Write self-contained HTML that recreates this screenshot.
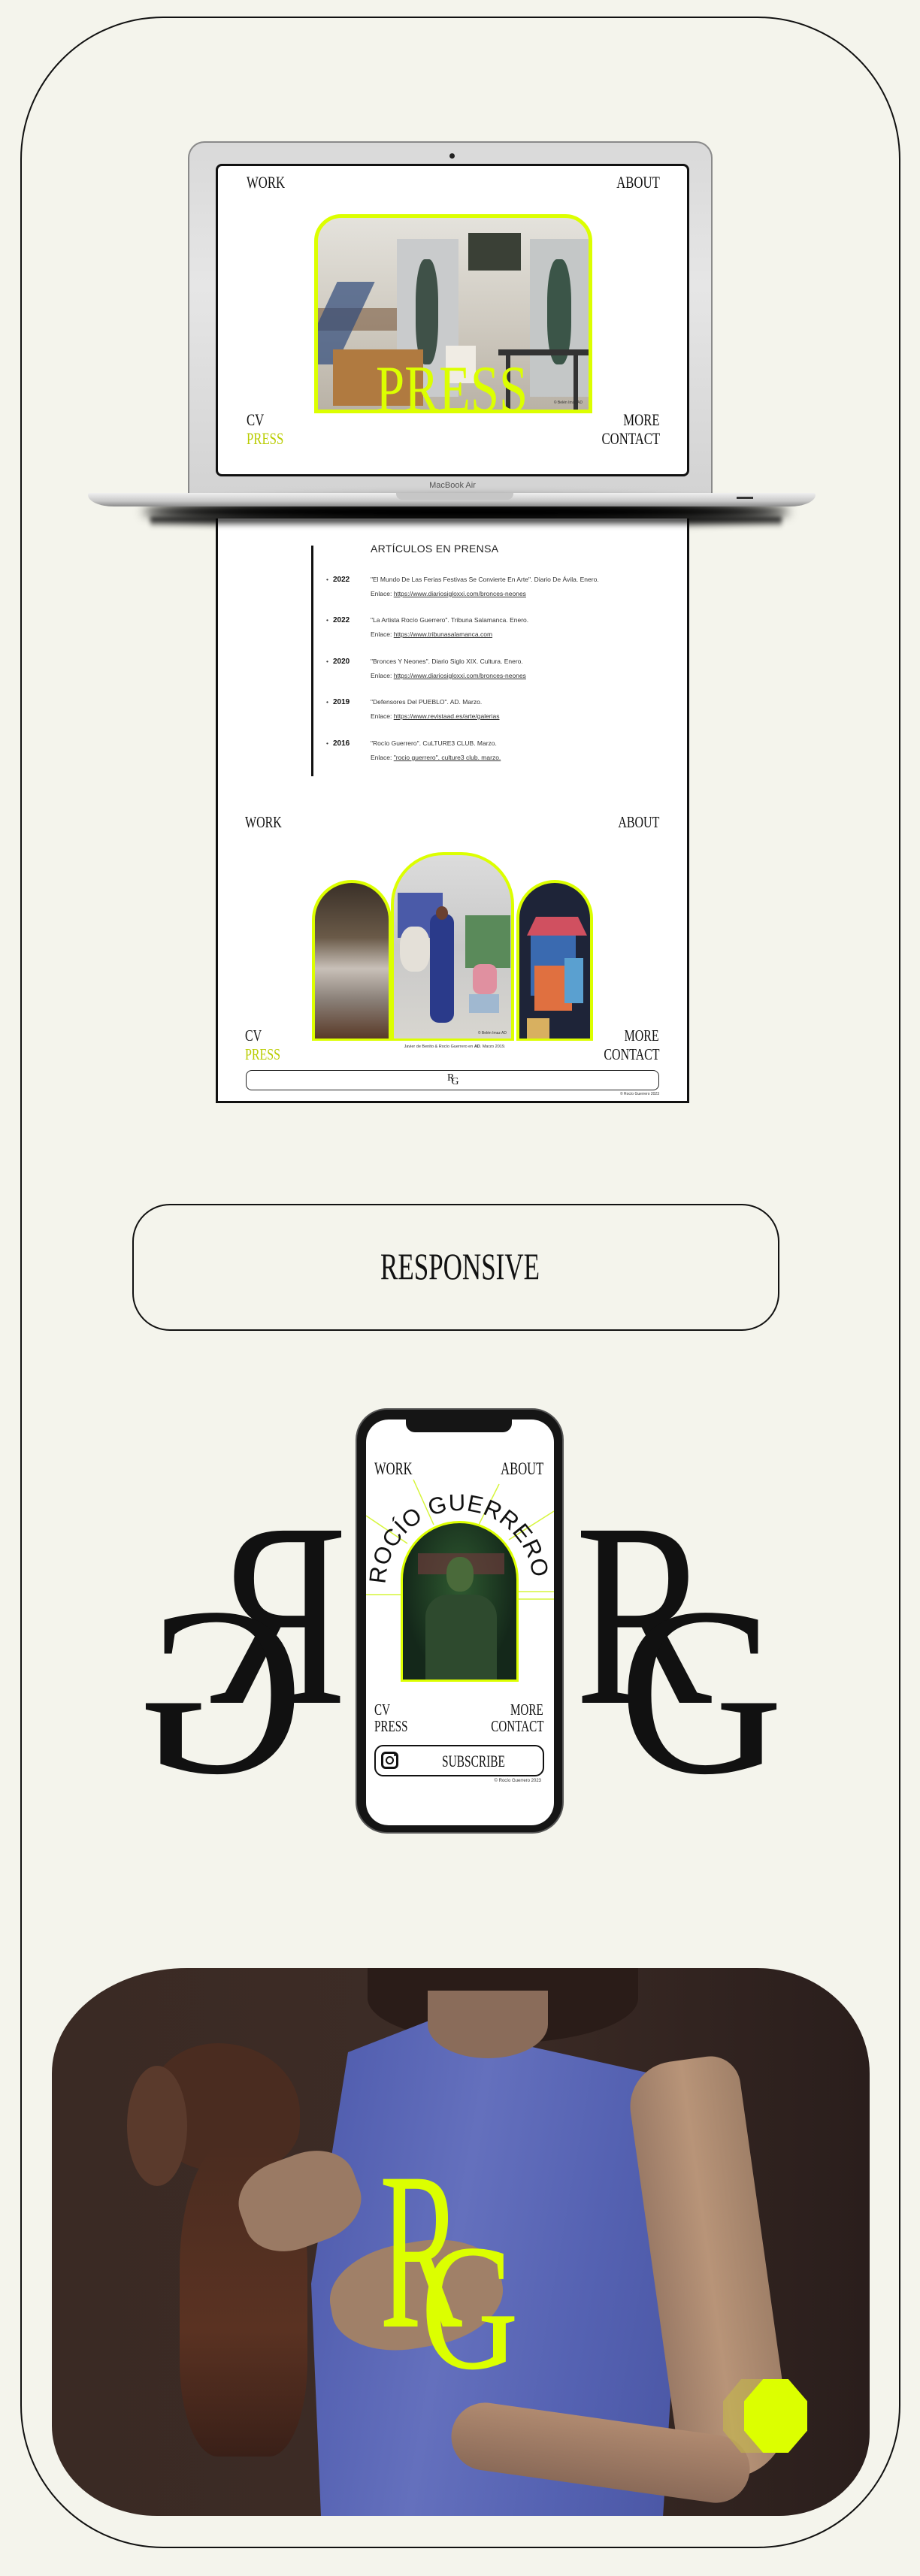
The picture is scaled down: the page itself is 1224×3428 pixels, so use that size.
<!DOCTYPE html>
<html><head><meta charset="utf-8"><style>
*{margin:0;padding:0;box-sizing:border-box}
body{width:1224px;height:3428px;background:#f4f4ec;position:relative;overflow:hidden;font-family:"Liberation Sans",sans-serif}
.a{position:absolute}
.d{position:absolute;font-family:"Liberation Serif",serif;white-space:nowrap;line-height:1;color:#111;transform-origin:0 50%}
.r{transform-origin:100% 50%}
</style></head><body>

<div class="a" style="left:27px;top:22px;width:1171px;height:3369px;border:2.5px solid #111;border-radius:190px"></div>

<!-- laptop lid -->
<div class="a" style="left:250px;top:188px;width:698px;height:480px;border-radius:22px 22px 0 0;background:linear-gradient(#d9d9d9,#e6e6e6 40%,#d2d2d2);border:2px solid #8a8a8a;border-bottom:none"></div>
<div class="a" style="left:598px;top:204px;width:7px;height:7px;border-radius:50%;background:#222"></div>
<div class="a" style="left:287px;top:218px;width:630px;height:416px;background:#fff;border:3px solid #111;border-radius:8px"></div>
<div class="a" style="left:567px;top:640px;width:70px;font-size:11px;color:#555;text-align:center">MacBook Air</div>

<div class="d" style="left:328px;top:232px;font-size:22px;transform:scaleX(.76)">WORK</div>
<div class="d r" style="right:346px;top:232px;font-size:22px;transform:scaleX(.76)">ABOUT</div>
<div class="d" style="left:328px;top:548px;font-size:22px;transform:scaleX(.76)">CV</div>
<div class="d" style="left:328px;top:573px;font-size:22px;transform:scaleX(.76);color:#b9cc00">PRESS</div>
<div class="d r" style="right:346px;top:548px;font-size:22px;transform:scaleX(.76)">MORE</div>
<div class="d r" style="right:346px;top:573px;font-size:22px;transform:scaleX(.76)">CONTACT</div>
<div class="a" style="left:418px;top:285px;width:370px;height:265px;border:5px solid #dcff00;border-radius:36px 36px 0 0;overflow:hidden;background:linear-gradient(#e4e2dc,#cfcac0 55%,#b9b2a6)">
  <div class="a" style="left:0;top:120px;width:110px;height:30px;background:#7a5a40;opacity:.6"></div>
  <div class="a" style="left:105px;top:28px;width:82px;height:210px;background:#c9cbcc"></div>
  <div class="a" style="left:130px;top:55px;width:30px;height:140px;border-radius:40%;background:#3f5148"></div>
  <div class="a" style="left:282px;top:28px;width:80px;height:210px;background:#c4c7c7"></div>
  <div class="a" style="left:305px;top:55px;width:32px;height:140px;border-radius:40%;background:#3b5548"></div>
  <div class="a" style="left:200px;top:20px;width:70px;height:50px;background:#3a4036"></div>
  <div class="a" style="left:0;top:85px;width:50px;height:110px;background:#2f4a7a;opacity:.7;transform:skewX(-25deg)"></div>
  <div class="a" style="left:20px;top:175px;width:120px;height:75px;background:#b07a40"></div>
  <div class="a" style="left:240px;top:175px;width:120px;height:8px;background:#333"></div>
  <div class="a" style="left:250px;top:180px;width:6px;height:75px;background:#333"></div>
  <div class="a" style="left:340px;top:180px;width:6px;height:75px;background:#333"></div>
  <div class="a" style="left:170px;top:170px;width:40px;height:50px;background:#f0ece4"></div>
  <div class="a" style="right:8px;bottom:6px;font-size:5px;color:#333">© Belén Imaz AD</div>
</div>
<div class="d" style="left:500px;top:475px;font-size:88px;color:#dcff00;transform:scaleX(.78)">PRESS</div>

<!-- laptop base -->
<div class="a" style="left:190px;top:664px;width:860px;height:34px;border-radius:50%;background:#000;filter:blur(7px)"></div>
<div class="a" style="left:117px;top:656px;width:968px;height:18px;border-radius:3px 3px 40px 40px/3px 3px 18px 18px;background:linear-gradient(#f0f0f0,#c8c8c8 60%,#8a8a8a)"></div>
<div class="a" style="left:527px;top:656px;width:156px;height:9px;border-radius:0 0 8px 8px;background:#c6c6c6"></div>
<div class="a" style="left:980px;top:661px;width:22px;height:3px;background:#333"></div>

<!-- press page -->
<div class="a" style="left:287px;top:690px;width:630px;height:778px;background:#fff;border:3px solid #111;border-top:none"></div>
<div class="a" style="left:200px;top:688px;width:840px;height:14px;background:linear-gradient(#000,rgba(0,0,0,0));filter:blur(3px)"></div>
<div class="a" style="left:414px;top:726px;width:2.5px;height:307px;background:#111"></div>
<div class="a" style="left:493px;top:722px;font-size:14px;color:#222;letter-spacing:.3px">ARTÍCULOS EN PRENSA</div>

<div class="a" style="left:0;top:0;font-size:8.5px;color:#333">
<div class="a" style="left:434px;top:762px;width:300px;line-height:19px"><span style="position:absolute;left:0">•</span><b style="position:absolute;left:9px;font-size:10px;color:#111">2022</b><span style="position:absolute;left:59px;white-space:nowrap">"El Mundo De Las Ferias Festivas Se Convierte En Arte". Diario De Ávila. Enero.<br>Enlace: <u>https://www.diariosigloxxi.com/bronces-neones</u></span></div>
<div class="a" style="left:434px;top:816px;width:300px;line-height:19px"><span style="position:absolute;left:0">•</span><b style="position:absolute;left:9px;font-size:10px;color:#111">2022</b><span style="position:absolute;left:59px;white-space:nowrap">"La Artista Rocío Guerrero". Tribuna Salamanca. Enero.<br>Enlace: <u>https://www.tribunasalamanca.com</u></span></div>
<div class="a" style="left:434px;top:871px;width:300px;line-height:19px"><span style="position:absolute;left:0">•</span><b style="position:absolute;left:9px;font-size:10px;color:#111">2020</b><span style="position:absolute;left:59px;white-space:nowrap">"Bronces Y Neones". Diario Siglo XIX. Cultura. Enero.<br>Enlace: <u>https://www.diariosigloxxi.com/bronces-neones</u></span></div>
<div class="a" style="left:434px;top:925px;width:300px;line-height:19px"><span style="position:absolute;left:0">•</span><b style="position:absolute;left:9px;font-size:10px;color:#111">2019</b><span style="position:absolute;left:59px;white-space:nowrap">"Defensores Del PUEBLO". AD. Marzo.<br>Enlace: <u>https://www.revistaad.es/arte/galerias</u></span></div>
<div class="a" style="left:434px;top:980px;width:300px;line-height:19px"><span style="position:absolute;left:0">•</span><b style="position:absolute;left:9px;font-size:10px;color:#111">2016</b><span style="position:absolute;left:59px;white-space:nowrap">"Rocío Guerrero". CuLTURE3 CLUB. Marzo.<br>Enlace: <u>"rocio guerrero". culture3 club. marzo.</u></span></div>
</div>

<div class="d" style="left:326px;top:1084px;font-size:21px;transform:scaleX(.76)">WORK</div>
<div class="d r" style="right:347px;top:1084px;font-size:21px;transform:scaleX(.76)">ABOUT</div>
<div class="d" style="left:326px;top:1368px;font-size:21px;transform:scaleX(.76)">CV</div>
<div class="d" style="left:326px;top:1393px;font-size:21px;transform:scaleX(.76);color:#b9cc00">PRESS</div>
<div class="d r" style="right:347px;top:1368px;font-size:21px;transform:scaleX(.76)">MORE</div>
<div class="d r" style="right:347px;top:1393px;font-size:21px;transform:scaleX(.76)">CONTACT</div>

<div class="a" style="left:415px;top:1171px;width:106px;height:214px;border:4px solid #dcff00;border-bottom-width:3px;border-radius:53px 53px 0 0;overflow:hidden;background:linear-gradient(#3a3028,#6a5a48 35%,#c8c0b8 55%,#8a8078 75%,#5a3a28)"></div>
<div class="a" style="left:520px;top:1134px;width:164px;height:251px;border:4px solid #dcff00;border-bottom-width:3px;border-radius:70px 70px 0 0;overflow:hidden;background:linear-gradient(#dcdcdc,#c8c8c8 50%,#d8d6d0)">
  <div class="a" style="left:5px;top:50px;width:60px;height:60px;background:#4a5aa8"></div>
  <div class="a" style="left:95px;top:80px;width:60px;height:70px;background:#5a8a5a"></div>
  <div class="a" style="left:8px;top:95px;width:40px;height:60px;border-radius:40%;background:#e4e0d8"></div>
  <div class="a" style="left:48px;top:78px;width:32px;height:145px;border-radius:12px;background:#2a3a8a"></div>
  <div class="a" style="left:56px;top:68px;width:16px;height:18px;border-radius:50%;background:#6a4030"></div>
  <div class="a" style="left:105px;top:145px;width:32px;height:40px;border-radius:10px;background:#e090a0"></div>
  <div class="a" style="left:100px;top:185px;width:40px;height:25px;background:#a0b8d0"></div>
  <div class="a" style="right:6px;bottom:4px;font-size:5px;color:#333">© Belén Imaz AD</div>
</div>
<div class="a" style="left:687px;top:1171px;width:102px;height:214px;border:4px solid #dcff00;border-bottom-width:3px;border-radius:51px 51px 0 0;overflow:hidden;background:#1e2438">
  <div class="a" style="left:10px;top:45px;width:80px;height:25px;background:#d05060;clip-path:polygon(15% 0,85% 0,100% 100%,0 100%)"></div>
  <div class="a" style="left:15px;top:70px;width:60px;height:80px;background:#3a6ab0"></div>
  <div class="a" style="left:20px;top:110px;width:50px;height:60px;background:#e07040"></div>
  <div class="a" style="left:60px;top:100px;width:25px;height:60px;background:#5aa0d0"></div>
  <div class="a" style="left:10px;top:180px;width:30px;height:30px;background:#d8b060"></div>
</div>
<div class="a" style="left:420px;top:1390px;width:370px;text-align:center;font-size:5.5px;color:#333">Javier de Benito &amp; Rocío Guerrero en <b>AD</b>. Marzo 2019.</div>
<div class="a" style="left:327px;top:1424px;width:550px;height:27px;border:1.5px solid #222;border-radius:8px"></div>
<div class="d" style="left:595px;top:1428px;font-size:14px">R<span style="margin-left:-4px;position:relative;top:5px">G</span></div>
<div class="a" style="left:800px;top:1453px;width:77px;text-align:right;font-size:5px;color:#333">© Rocío Guerrero 2023</div>

<!-- RESPONSIVE -->
<div class="a" style="left:176px;top:1602px;width:861px;height:169px;border:2.5px solid #111;border-radius:50px"></div>
<div class="d" style="left:0;width:1224px;top:1660px;font-size:50px;text-align:center;transform-origin:50% 50%;transform:scaleX(.7)">RESPONSIVE</div>

<!-- big RG monograms -->
<div class="a" style="left:182px;top:2029px;width:272px;height:365px;overflow:hidden;transform:scaleX(-1)">
  <div class="d" style="left:-8px;top:-56px;font-size:350px;transform:scaleX(.78)">R</div>
  <div class="d" style="left:50px;top:62px;font-size:320px;transform:scaleX(.95)">G</div>
</div>
<div class="a" style="left:773px;top:2029px;width:272px;height:365px;overflow:hidden">
  <div class="d" style="left:-8px;top:-56px;font-size:350px;transform:scaleX(.78)">R</div>
  <div class="d" style="left:50px;top:62px;font-size:320px;transform:scaleX(.95)">G</div>
</div>

<!-- phone -->
<div class="a" style="left:473px;top:1874px;width:277px;height:566px;border-radius:42px;background:#151515;border:2px solid #555"></div>
<div class="a" style="left:487px;top:1889px;width:250px;height:540px;border-radius:30px;background:#fff;overflow:hidden">
  <div class="a" style="left:53px;top:0;width:141px;height:17px;background:#151515;border-radius:0 0 12px 12px"></div>
</div>
<svg class="a" style="left:487px;top:1889px" width="250" height="540">
  <g stroke="#d6f53a" stroke-width="1.5">
    <line x1="63" y1="80" x2="90" y2="140"/><line x1="177" y1="86" x2="150" y2="140"/>
    <line x1="0" y1="128" x2="55" y2="165"/><line x1="250" y1="122" x2="190" y2="160"/>
    <line x1="0" y1="233" x2="48" y2="233"/><line x1="196" y1="229" x2="250" y2="229"/><line x1="196" y1="239" x2="250" y2="239"/>
  </g>
  <path id="arc" d="M 26 219 A 98 98 0 0 1 222 219" fill="none"/>
  <text font-family="Liberation Sans,sans-serif" font-size="31" fill="#111" letter-spacing="1"><textPath href="#arc" textLength="300" lengthAdjust="spacing">ROCÍO GUERRERO</textPath></text>
</svg>
<div class="a" style="left:533px;top:2024px;width:157px;height:214px;border:3px solid #dcff00;border-radius:78px 78px 0 0;overflow:hidden;background:radial-gradient(ellipse at 50% 40%,#2f5a30,#14281a 70%)">
  <div class="a" style="left:20px;top:40px;width:115px;height:28px;background:#6a3a3a;opacity:.7"></div>
  <div class="a" style="left:58px;top:45px;width:36px;height:46px;border-radius:45%;background:#4a6a3a"></div>
  <div class="a" style="left:30px;top:95px;width:95px;height:120px;border-radius:30px 30px 0 0;background:#2e4a2e"></div>
</div>
<div class="d" style="left:498px;top:1943px;font-size:23px;transform:scaleX(.72)">WORK</div>
<div class="d r" style="right:501px;top:1943px;font-size:23px;transform:scaleX(.72)">ABOUT</div>
<div class="d" style="left:498px;top:2265px;font-size:21px;transform:scaleX(.72)">CV</div>
<div class="d" style="left:498px;top:2287px;font-size:21px;transform:scaleX(.72)">PRESS</div>
<div class="d r" style="right:501px;top:2265px;font-size:21px;transform:scaleX(.72)">MORE</div>
<div class="d r" style="right:501px;top:2287px;font-size:21px;transform:scaleX(.72)">CONTACT</div>
<div class="a" style="left:498px;top:2322px;width:226px;height:42px;border:2.5px solid #111;border-radius:12px"></div>
<div class="a" style="left:507px;top:2331px;width:23px;height:23px;border:3px solid #111;border-radius:6px"></div>
<div class="a" style="left:513px;top:2337px;width:11px;height:11px;border:2.5px solid #111;border-radius:50%"></div>
<div class="a" style="left:524px;top:2334px;width:3px;height:3px;background:#111;border-radius:50%"></div>
<div class="d" style="left:560px;top:2333px;font-size:22px;width:140px;text-align:center;transform-origin:50% 50%;transform:scaleX(.7)">SUBSCRIBE</div>
<div class="a" style="left:620px;top:2367px;width:100px;text-align:right;font-size:6px;color:#333">© Rocío Guerrero 2023</div>

<!-- painting -->
<div class="a" style="left:69px;top:2619px;width:1088px;height:729px;border-radius:180px 150px 120px 140px/140px 140px 110px 120px;overflow:hidden;background:linear-gradient(90deg,#3a2a24,#3d2c26 50%,#2a1e1c)">
  <div class="a" style="left:420px;top:-20px;width:360px;height:120px;background:#2a1c18;border-radius:0 0 50% 50%"></div>
  <div class="a" style="left:345px;top:70px;width:490px;height:700px;background:linear-gradient(100deg,#4d5aac,#6470bd 40%,#5562b2 70%,#4a56a4);clip-path:polygon(10% 6%,32% 0,60% 5%,92% 10%,100% 45%,95% 100%,3% 100%,0 50%)"></div>
  <div class="a" style="left:500px;top:30px;width:160px;height:90px;background:#8a6c5a;border-radius:0 0 50% 50%"></div>
  <div class="a" style="left:800px;top:120px;width:150px;height:560px;background:linear-gradient(90deg,#9a7a66,#b89478 50%,#a08068);border-radius:60px 40px 80px 40px;transform:rotate(-8deg)"></div>
  <div class="a" style="left:530px;top:600px;width:400px;height:90px;background:linear-gradient(#b08a70,#8a6a58);border-radius:50px;transform:rotate(8deg)"></div>
  <div class="a" style="left:130px;top:100px;width:200px;height:170px;background:#4a2c20;border-radius:50% 60% 40% 50%"></div>
  <div class="a" style="left:100px;top:130px;width:80px;height:160px;background:#5a3a2c;border-radius:50%"></div>
  <div class="a" style="left:170px;top:230px;width:170px;height:420px;background:linear-gradient(#4a2c20,#5a3222 60%,#3a2018);border-radius:40% 40% 30% 30%"></div>
  <div class="a" style="left:250px;top:250px;width:160px;height:120px;background:#9a7a64;border-radius:40%;transform:rotate(-20deg)"></div>
  <div class="a" style="left:370px;top:365px;width:230px;height:140px;background:#a08068;border-radius:45%;transform:rotate(-10deg)"></div>
</div>
<div class="d" style="left:505px;top:2845px;font-size:300px;color:#dcff00;transform:scaleX(.55)">R</div>
<div class="d" style="left:560px;top:2950px;font-size:240px;color:#dcff00;transform:scaleX(.75)">G</div>
<div class="a" style="left:962px;top:3166px;width:80px;height:98px;background:#c8c040;opacity:.5;clip-path:polygon(30% 0,70% 0,100% 30%,100% 70%,70% 100%,30% 100%,0 70%,0 30%)"></div>
<div class="a" style="left:990px;top:3166px;width:84px;height:98px;background:#dcff00;clip-path:polygon(30% 0,70% 0,100% 30%,100% 70%,70% 100%,30% 100%,0 70%,0 30%)"></div>

</body></html>
